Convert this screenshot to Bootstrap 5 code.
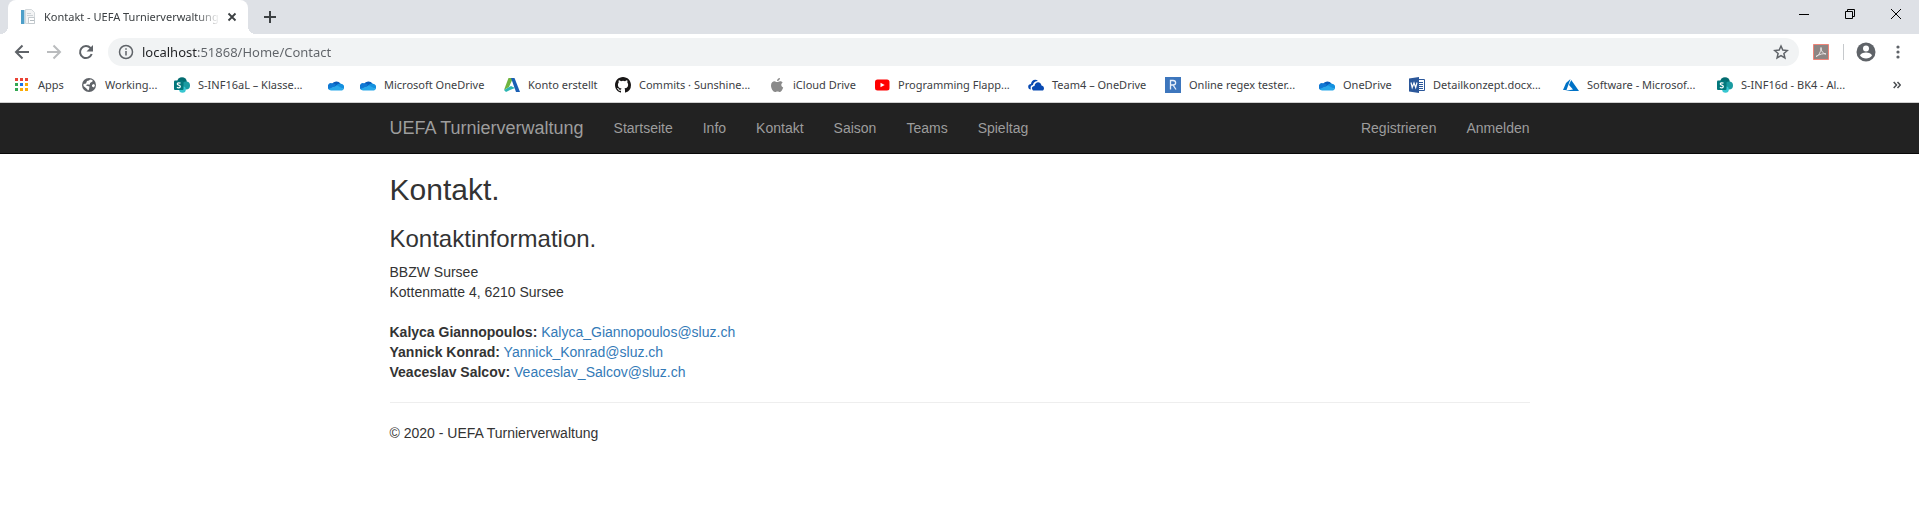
<!DOCTYPE html>
<html lang="de">
<head>
<meta charset="utf-8">
<meta name="viewport" content="width=device-width, initial-scale=1">
<title>Kontakt - UEFA Turnierverwaltung</title>
<link href="https://cdn.jsdelivr.net/npm/bootstrap@5.3.0/dist/css/bootstrap.min.css" rel="stylesheet">
<style>
body{font:14px/20px "Liberation Sans",Arial,sans-serif;color:#333;background:#fff}
svg{display:block;flex:none}
button{border:0;background:none;padding:0;color:inherit;display:flex;align-items:center;justify-content:center;flex:none}
.browser-ui{font-family:"Noto Sans","Open Sans",sans-serif;font-size:11px;line-height:16px;color:#3c4043;border-bottom:1px solid #d0d0d0}
.tab-strip{background:#dee1e6;height:34px;padding-left:8px}
.active-tab{position:relative;width:240px;background:#fff;border-radius:8px 8px 0 0;padding:0 8px 0 12px}
.active-tab::before,.active-tab::after{content:"";position:absolute;bottom:0;width:8px;height:8px}
.active-tab::before{left:-8px;background:radial-gradient(circle at 0 0,transparent 8px,#fff 8px)}
.active-tab::after{right:-8px;background:radial-gradient(circle at 100% 0,transparent 8px,#fff 8px)}
.tab-title{width:176px;overflow:hidden;white-space:nowrap;-webkit-mask-image:linear-gradient(90deg,#000 152px,transparent 176px)}
.win-btn{width:46px;height:28px;color:#000}
.toolbar{height:36px;padding:0 19px 0 12px;color:#5f6368}
.tool-btn{width:20px;height:28px;margin-right:12px}
.omnibox{height:28px;border-radius:14px;background:#f1f3f4;padding:0 10px}
.omnibox input{border:0;outline:0;padding:0;font-size:13px;line-height:20px;min-width:0;color:#5f6368;background:linear-gradient(90deg,#202124 56px,#5f6368 56px);-webkit-background-clip:text;background-clip:text;-webkit-text-fill-color:transparent}
.ext-btn{margin:0 14px}
.divider-line{width:1px;height:16px;background:#c6c9cc}
.profile-btn{margin:0 20px 0 12px}
.bookmarks{display:grid;grid-template-columns:67px 93px 154px 32px 144px 111px 154px 105px 154px 137px 154px 90px 154px 154px 1fr auto;padding:6px 18px 8px 14px;align-items:center}
.bookmarks a{display:flex;align-items:center;gap:8px;height:18px;color:#3c4043;text-decoration:none;white-space:nowrap}
.site-width{max-width:1170px;padding:0 15px}
.site-nav{background:#222;border-bottom:1px solid #080808;padding:0}
.site-nav .container{padding:0 15px}
.site-nav .navbar-brand{font-size:18px;line-height:20px;padding:15px;margin:0 0 0 -15px;color:#9d9d9d}
.site-nav .navbar-nav .nav-link{padding:15px;line-height:20px;color:#9d9d9d}
.site-nav .account-links{margin-right:-15px}
h2{font-size:30px;line-height:33px;margin:19px 0 10px}
h3{font-size:24px;line-height:26px;margin:20px 0 10px}
address{margin:0 0 20px;line-height:20px}
main a{color:#337ab7;text-decoration:none}
hr{margin:20px 0;border-top:1px solid #eee;opacity:1}
</style>
</head>
<body>
<svg width="0" height="0" class="position-absolute" aria-hidden="true">
<defs>
<symbol id="cloud" viewBox="0 0 16 16"><path fill="#0a5dbb" d="M4 7a5 4.600 0 0 1 8.500-.5L9 11 2 9z"/><path fill="#0f78d4" d="M1 12.500A3.500 3.500 0 0 1 4 6.300c1.500 0 2.500.4 4 1.600L2 13z"/><path fill="#1490df" d="M8 8.500c2-2 3.500-2.500 4.800-1.800A3.300 3.300 0 0 1 15.500 12L7 10z"/><path fill="#28a8ea" d="M.5 12 9 8.600l6.800 3.300c-.5.900-1.400 1.500-2.500 1.500H3c-1 0-2-.5-2.500-1.400z"/></symbol>
<symbol id="sharepoint" viewBox="0 0 16 16"><circle cx="8" cy="5" r="4.800" fill="#036c70"/><circle cx="12" cy="8.500" r="4" fill="#1a9ba1"/><circle cx="8.500" cy="12.500" r="3.300" fill="#37c6d0"/><rect y="3.500" width="9.500" height="9.500" rx="1" fill="#03787c"/><path fill="none" stroke="#fff" stroke-width="1.300" d="M6.500 6.300C5.500 5.500 3.300 5.600 3.300 7s3 1 3 2.500-2.300 1.700-3.300.8"/></symbol>
</defs>
</svg>

<header class="browser-ui">
  <div class="tab-strip d-flex">
    <div class="active-tab d-flex align-items-center">
      <svg width="16" height="16" viewBox="0 0 16 16"><path fill="#4d9fc9" d="M1 1h3v14H1z"/><path fill="#b9d6e6" d="M4 1h1v14H4z"/><path fill="#f3f4f5" stroke="#d3d8db" d="M5.500.5h6l3 3v11h-9z"/><path stroke="#cdd2d6" d="M7 4.500h4M7 6.500h6"/><path fill="#fff" stroke="#c3c9cd" d="M8.500 8.500h6v6h-6z"/><path stroke="#b4bcc1" d="M10 11.500h4"/></svg>
      <span class="tab-title ms-2">Kontakt - UEFA Turnierverwaltung</span>
      <button type="button" class="ms-auto" aria-label="Tab schließen"><svg width="16" height="16" viewBox="0 0 16 16"><path stroke="#3c4043" stroke-width="1.800" d="m4.500 4.500 7 7m0-7-7 7"/></svg></button>
    </div>
    <button type="button" class="ms-3" aria-label="Neuer Tab"><svg width="12" height="12" viewBox="0 0 12 12"><path stroke="#3c4043" stroke-width="2" d="M6 0v12M0 6h12"/></svg></button>
    <div class="d-flex ms-auto">
      <button type="button" class="win-btn" aria-label="Minimieren"><svg width="10" height="10"><path stroke="#000" d="M0 5.500h10"/></svg></button>
      <button type="button" class="win-btn" aria-label="Verkleinern"><svg width="10" height="10" fill="none" stroke="#000"><path d="M.5 2.500h7v7h-7zM2.500 2V.5h7v7H8"/></svg></button>
      <button type="button" class="win-btn" aria-label="Schließen"><svg width="10" height="10"><path stroke="#000" d="m0 0 10 10M10 0 0 10"/></svg></button>
    </div>
  </div>

  <div class="toolbar d-flex align-items-center">
    <button type="button" class="tool-btn" aria-label="Zurück"><svg width="16" height="16" fill="none" stroke="#5f6368" stroke-width="2"><path d="M15 8H2m6.500-6.500L2 8l6.500 6.500"/></svg></button>
    <button type="button" class="tool-btn" aria-label="Vorwärts"><svg width="16" height="16" fill="none" stroke="#babcbe" stroke-width="2"><path d="M1 8h13M7.500 1.500 14 8l-6.500 6.500"/></svg></button>
    <button type="button" class="tool-btn" aria-label="Neu laden"><svg width="16" height="16" fill="none" stroke="#5f6368" stroke-width="2"><path d="M13.700 10A6 6 0 1 1 12.500 4L14 5.500"/><path fill="#5f6368" stroke="none" d="M15 1v6.500H8.500z"/></svg></button>
    <div class="omnibox d-flex align-items-center flex-grow-1">
      <svg width="16" height="16" fill="none" stroke="#5f6368" stroke-width="1.500"><circle cx="8" cy="8" r="6.500"/><path d="M8 7v4.500M8 4.300v1.500"/></svg>
      <input class="flex-grow-1 ms-2" type="text" value="localhost:51868/Home/Contact" aria-label="Adresse">
      <button type="button" aria-label="Lesezeichen setzen"><svg width="16" height="16" viewBox="0 0 16 16"><path fill="none" stroke="#5f6368" stroke-width="1.500" d="m8 2 1.800 4 4.500.5-3.400 3 1 4.400L8 11.600l-3.900 2.300 1-4.400-3.400-3L6.200 6z"/></svg></button>
    </div>
    <button type="button" class="ext-btn" aria-label="Adobe Acrobat"><svg width="16" height="16"><path fill="#8d8583" stroke="#ee8377" d="M.5.500h15v15H.5z"/><path fill="none" stroke="#e8e4e3" d="M3 12.500c3-1 5-5 5-9 0 4 2 6 5 6.500-3-.7-6 0-10 2.500z"/></svg></button>
    <span class="divider-line"></span>
    <button type="button" class="profile-btn" aria-label="Profil"><svg width="20" height="20"><circle cx="10" cy="10" r="9.500" fill="#5f6368"/><circle cx="10" cy="6.500" r="3" fill="#fff"/><path fill="#fff" d="M4 13.500c1-4 11-4 12 0-2.500 4-9.500 4-12 0z"/></svg></button>
    <button type="button" aria-label="Menü"><svg width="4" height="16" fill="#5f6368"><circle cx="2" cy="3" r="1.600"/><circle cx="2" cy="8" r="1.600"/><circle cx="2" cy="13" r="1.600"/></svg></button>
  </div>

  <nav class="bookmarks" aria-label="Lesezeichen">
    <a href="#"><svg width="16" height="16"><path fill="#ea4335" d="M1 1h3v3H1zM6 1h3v3H6zM11 1h3v3h-3z"/><path fill="#34a853" d="M1 6h3v3H1zM1 11h3v3H1z"/><path fill="#1a73e8" d="M6 6h3v3H6z"/><path fill="#fbab05" d="M11 6h3v3h-3zM6 11h3v3H6zM11 11h3v3h-3z"/></svg>Apps</a>
    <a href="#"><svg width="16" height="16"><circle cx="8" cy="8" r="7" fill="#5f6368"/><path fill="#fff" d="M9 2.500 11.500 3v1.500L9 6v1.500H6L5 8.500l3.500 1-.5 3-1 1-1-1.500-3.500-3V7L5 6.500 6 4l2-.5zM12.500 7l1.500 1-1 2.500-2-1V8z"/></svg>Working...</a>
    <a href="#"><svg width="16" height="16"><use href="#sharepoint"/></svg>S-INF16aL – Klasse...</a>
    <a href="#" aria-label="OneDrive"><svg width="16" height="16"><use href="#cloud"/></svg></a>
    <a href="#"><svg width="16" height="16"><use href="#cloud"/></svg>Microsoft OneDrive</a>
    <a href="#"><svg width="16" height="16"><path fill="#6fb43f" d="M4.500 1H9L5 10l-5 3z"/><path fill="#2cb6b2" d="m0 13 7-4 4 2-5 2-4 2z"/><path fill="#1a5fb4" d="M7 1h3.500L16 15h-4z"/></svg>Konto erstellt</a>
    <a href="#"><svg width="16" height="16" viewBox="0 0 16 16"><path fill="#191717" d="M8 0C3.580 0 0 3.580 0 8c0 3.540 2.290 6.530 5.470 7.590.4.070.55-.17.55-.38 0-.19-.01-.82-.01-1.490-2.010.37-2.530-.49-2.690-.94-.09-.23-.48-.94-.82-1.130-.28-.15-.68-.52-.01-.53.63-.01 1.080.58 1.230.82.720 1.210 1.870.87 2.330.66.070-.52.280-.87.510-1.070-1.780-.2-3.640-.89-3.640-3.950 0-.87.310-1.590.82-2.150-.08-.2-.36-1.020.08-2.120 0 0 .67-.21 2.200.82a7.500 7.500 0 0 1 4 0c1.530-1.040 2.200-.82 2.200-.82.44 1.100.16 1.920.08 2.120.51.56.82 1.270.82 2.150 0 3.070-1.870 3.750-3.650 3.950.29.25.54.73.54 1.480 0 1.070-.01 1.930-.01 2.200 0 .21.15.46.55.38A8 8 0 0 0 16 8c0-4.420-3.580-8-8-8z"/></svg>Commits · Sunshine...</a>
    <a href="#"><svg width="16" height="16"><path fill="#8a8a8a" d="M11 1c0 1.500-1 3-3 3 0-1.500 1-2.800 3-3zM8 5c1 0 2-.8 3-.8s2 .5 2.700 1.400c-2 1.200-1.800 4 .5 5C13.500 12.700 12.300 15 11 15c-1 0-1.500-.5-2.500-.5S7 15 6 15c-1.700 0-4-3.500-4-6.500s2-4.300 3.500-4.300C6.500 4.200 7.300 5 8 5z"/></svg>iCloud Drive</a>
    <a href="#"><svg width="16" height="16"><rect x="1" y="2.500" width="14.500" height="11" rx="2.500" fill="red"/><path fill="#fff" d="m6.500 5.700 4.200 2.300-4.200 2.300z"/></svg>Programming Flapp...</a>
    <a href="#"><svg width="16" height="16"><path fill="#094ab2" d="M1 12C-1 9 1 7 3 7c0-3 4-6 7-3-3 0-5 2-5 4-2 0-3 2-2 4.500zM5 13.500c-2-2-1-4.500 1.500-4.500C7 4.500 12.500 4 13.500 8.500c3 .5 3 4 1.500 5z"/></svg>Team4 – OneDrive</a>
    <a href="#"><svg width="16" height="16"><path fill="#3d76bd" d="M0 0h16v16H0z"/><path fill="none" stroke="#e7effa" stroke-width="1.300" d="M5.500 12.500v-9H8c3.500 0 3.500 4.500 0 4.500H5.500M8 8l3 4.500"/></svg>Online regex tester...</a>
    <a href="#"><svg width="16" height="16"><use href="#cloud"/></svg>OneDrive</a>
    <a href="#"><svg width="16" height="16"><path fill="#fff" stroke="#2b579a" d="M8 2.500h7.500v11H8z"/><path stroke="#2b579a" d="M10 5.500h4M10 7.500h4M10 9.500h4M10 11.500h4"/><path fill="#2b579a" d="M0 1.500 10 0v16L0 14.500z"/><path fill="none" stroke="#fff" stroke-width="1.200" d="m2 5.500 1.200 5L5 6l1.700 4.500L8 5.500"/></svg>Detailkonzept.docx...</a>
    <a href="#"><svg width="16" height="16"><path fill="#0072c6" d="M7.500 2 3 6 0 13h3.500zM8.200 3 16 14H2l8-1.500-4-4.500z"/></svg>Software - Microsof...</a>
    <a href="#"><svg width="16" height="16"><use href="#sharepoint"/></svg>S-INF16d - BK4 - Al...</a>
    <button type="button" aria-label="Weitere Lesezeichen"><svg width="8" height="8" fill="none" stroke="#4a4d51" stroke-width="1.500"><path d="m.7 1 2.800 3L.7 7m3.800-6 2.800 3-2.800 3"/></svg></button>
  </nav>
</header>

<nav class="navbar navbar-expand site-nav" aria-label="Hauptnavigation">
  <div class="container site-width">
    <a class="navbar-brand" href="#">UEFA Turnierverwaltung</a>
    <div class="navbar-nav">
      <a class="nav-link" href="#">Startseite</a>
      <a class="nav-link" href="#">Info</a>
      <a class="nav-link" href="#">Kontakt</a>
      <a class="nav-link" href="#">Saison</a>
      <a class="nav-link" href="#">Teams</a>
      <a class="nav-link" href="#">Spieltag</a>
    </div>
    <div class="navbar-nav account-links ms-auto">
      <a class="nav-link" href="#">Registrieren</a>
      <a class="nav-link" href="#">Anmelden</a>
    </div>
  </div>
</nav>

<main class="container site-width">
  <h2>Kontakt.</h2>
  <h3>Kontaktinformation.</h3>
  <address>BBZW Sursee<br>Kottenmatte 4, 6210 Sursee</address>
  <address>
    <strong>Kalyca Giannopoulos:</strong> <a href="mailto:Kalyca_Giannopoulos@sluz.ch">Kalyca_Giannopoulos@sluz.ch</a><br>
    <strong>Yannick Konrad:</strong> <a href="mailto:Yannick_Konrad@sluz.ch">Yannick_Konrad@sluz.ch</a><br>
    <strong>Veaceslav Salcov:</strong> <a href="mailto:Veaceslav_Salcov@sluz.ch">Veaceslav_Salcov@sluz.ch</a>
  </address>
  <hr>
  <footer>© 2020 - UEFA Turnierverwaltung</footer>
</main>
<script src="https://cdn.jsdelivr.net/npm/bootstrap@5.3.0/dist/js/bootstrap.bundle.min.js"></script>
</body>
</html>
